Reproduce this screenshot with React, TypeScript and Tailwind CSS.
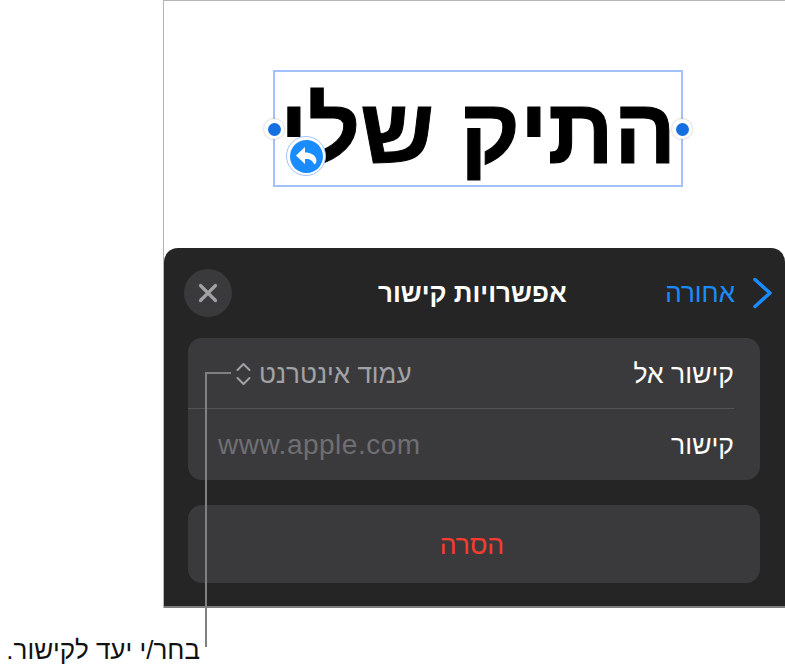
const hebrew = "font-['Liberation_Sans','DejaVu_Sans',sans-serif]"

function Handle({ className }: { className: string }) {
  return (
    <span className={`absolute flex h-[20px] w-[20px] items-center justify-center rounded-full bg-white shadow-[0_0_3px_rgba(0,0,0,0.25)] ${className}`}>
      <span className="h-[13px] w-[13px] rounded-full bg-[#1470e0]" />
    </span>
  )
}

export default function App() {
  return (
    <div className={`relative h-[670px] w-[785px] overflow-hidden bg-white ${hebrew}`}>
      <div className="ml-[163px] flex h-[608px] flex-col border-l border-t border-[#b5b5b5]">
        {/* Canvas with the selected text */}
        <div className="h-[247px] pl-[109px] pt-[69px]">
          <div className="relative flex h-[117px] w-[410px] items-center justify-center border-2 border-[#a3c2fb]">
            <span dir="rtl" className="mt-[4px] whitespace-nowrap text-[92px] font-bold leading-none text-black [-webkit-text-stroke:1px_black]">
              התיק שלי
            </span>
            <Handle className="left-[-11px] top-[47px]" />
            <Handle className="right-[-11px] top-[47px]" />
            <span className="absolute left-[11px] top-[64px] flex h-[40px] w-[40px] items-center justify-center rounded-full border border-[#a3c2fb] bg-white">
              <span className="flex h-[33px] w-[33px] items-center justify-center rounded-full bg-[#1a8cff]">
                <svg width="23" height="20" viewBox="0 0 23 20" fill="white">
                  <path d="M10 1 1 9.5 10 18v-5c4-.5 7 .5 9.5 5.5 1.5-1 2.5-3 1.5-6-1.200-3.500-5.500-6-11-6z" />
                </svg>
              </span>
            </span>
          </div>
        </div>

        {/* Link options sheet */}
        <div className="flex flex-1 flex-col rounded-t-[14px] border-b-2 border-[#7d7d7d] bg-[#252525] pl-[24px] pr-[25px]">
          <div className="relative flex h-[90px] items-center justify-between">
            <button className="ml-[-4px] flex h-[48px] w-[48px] items-center justify-center rounded-full bg-[#3a3a3c]">
              <svg width="20" height="20" viewBox="0 0 20 20" fill="none" stroke="#a2a2a6" strokeWidth="3.200" strokeLinecap="round">
                <path d="M2.500 2.500 17.500 17.500M17.500 2.500 2.500 17.500" />
              </svg>
            </button>
            <h2 dir="rtl" className="absolute left-[190px] top-[28px] text-[26px] font-bold leading-[34px] text-white">
              אפשרויות קישור
            </h2>
            <div className="mr-[-13px] flex items-center gap-[17px]">
              <span dir="rtl" className="text-[26px] leading-[34px] text-[#1a8cff]">אחורה</span>
              <svg width="21" height="32" viewBox="0 0 21 32" fill="none" stroke="#1a8cff" strokeWidth="3.500" strokeLinecap="round" strokeLinejoin="round">
                <path d="M3 2.500 18 16 3 29.500" />
              </svg>
            </div>
          </div>

          <div dir="rtl" className="flex h-[142px] flex-col rounded-[14px] bg-[#3a3a3c]">
            <div className="mr-[26px] flex h-[71px] items-center justify-between border-b border-[#545456] pl-[47px] pt-[1px]">
              <span className="text-[26.500px] leading-[34px] text-white">קישור אל</span>
              <span className="flex items-center gap-[7px]">
                <span className="text-[26px] leading-[34px] text-[#a2a2a6]">עמוד אינטרנט</span>
                <svg width="17" height="24" viewBox="0 0 17 24" fill="none" stroke="#a2a2a6" strokeWidth="2" strokeLinecap="round" strokeLinejoin="round">
                  <path d="M2.500 8 8.500 2 14.500 8M2.500 16l6 6 6-6" />
                </svg>
              </span>
            </div>
            <div className="mr-[26px] flex flex-1 items-center justify-between pl-[30px]">
              <span className="text-[26.500px] leading-[34px] text-white">קישור</span>
              <span dir="ltr" className="text-[28px] leading-[34px] tracking-[0.5px] text-[#6f6f73]">www.apple.com</span>
            </div>
          </div>

          <button dir="rtl" className="mt-[25px] h-[78px] rounded-[14px] bg-[#3a3a3c] pr-[4px] pt-[3px] text-[26.500px] text-[#ff3b30]">
            הסרה
          </button>
        </div>
      </div>

      {/* Callout line and caption */}
      <div className="absolute left-[205px] top-[372px] h-[2px] w-[26px] bg-[#808080]" />
      <div className="absolute left-[205px] top-[372px] h-[275px] w-[2px] bg-[#808080]" />
      <p dir="rtl" className="absolute right-[585px] top-[635px] whitespace-nowrap text-[26px] leading-[30px] text-[#111]">
        בחר/י יעד לקישור.
      </p>
    </div>
  )
}
